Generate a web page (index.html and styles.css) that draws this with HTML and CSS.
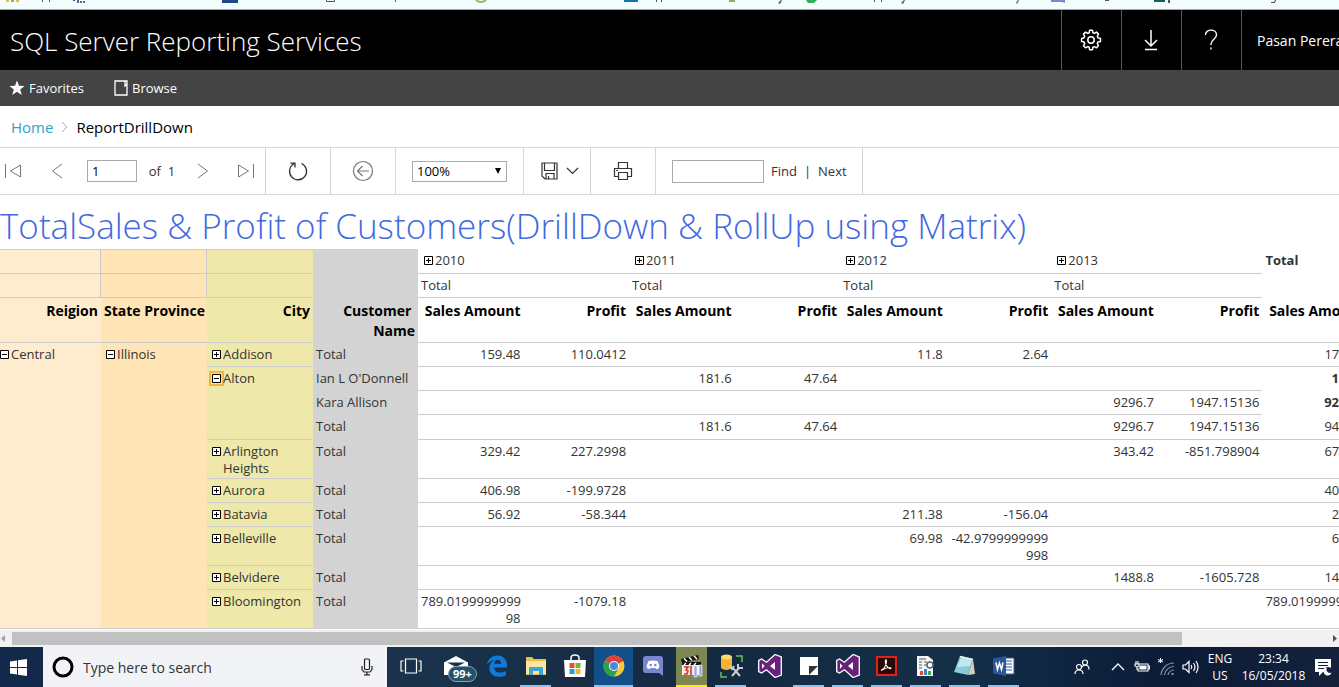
FILE: index.html
```html
<!DOCTYPE html>
<html lang="en">
<head>
<meta charset="utf-8">
<title>ReportDrillDown - SQL Server Reporting Services</title>
<link rel="stylesheet" href="styles.css">
</head>
<body>
<svg width="0" height="0" class="defs" aria-hidden="true">
  <defs>
    <symbol id="plus" viewBox="0 0 9 9"><path d="M.5.5h8v8h-8z" fill="#fff" stroke="#000"/><path d="M2 4.500h5M4.500 2v5" stroke="#000"/></symbol>
    <symbol id="minus" viewBox="0 0 9 9"><path d="M.5.5h8v8h-8z" fill="#fff" stroke="#000"/><path d="M2 4.500h5" stroke="#000"/></symbol>
    <symbol id="vs" viewBox="0 0 24 24"><path d="M17 .5 23.300 3v18L17 23.500l-8.500-7.700L3.500 19 .7 17.500v-11L3.500 5l5 3.200z" fill="#68217a" stroke="#fff" stroke-width="1.300"/><path d="M17 8v8l-5-4zM4 9.200 6.700 12 4 14.800z" fill="#fff"/></symbol>
  </defs>
</svg>
<div class="bookmarks" aria-hidden="true">
  <svg width="1339" height="9" viewBox="0 0 1339 9">
    <path d="M6 0h3v2h-3z" fill="#d8c548"/><path d="M11 0h3v2h-3z" fill="#b8a840"/><path d="M16 0h3v2h-3z" fill="#d8c548"/>
    <path d="M42 0h1v2h-1zM49 0h1v2h-1zM73 0h2v1h-2zM395 0h1v2h-1zM656 0h1v2h-1zM661 0h1v2h-1zM778 3l3-3h1l-2 4zM874 0h1v2h-1zM881 0h1v2h-1zM901 3l3-3h1l-2 4zM1016 3l2-3h1l-2 4zM1105 0h4v1h-4zM1168 0h2v3h-2zM1271 2h3l1-2h1l-1 3h-4z" fill="#555"/>
    <path d="M77 0h2v3h-2zM80 1h2v2h-2zM83 1h2v2h-2z" fill="#4a6f9c"/>
    <path d="M222 0h16v3h-16z" fill="#1f4788"/><path d="M326.500 0v1.500h8V0" fill="none" stroke="#555"/>
    <path d="M476 0q5 4 10 0" fill="none" stroke="#92ba63" stroke-width="2"/>
    <path d="M624 0h14v2h-14z" fill="#1276b2"/><path d="M729 0h6v2h-6z" fill="#8ab06b"/><path d="M806 0h11l-3 3h-6z" fill="#32ae55"/>
    <path d="M1051 0h14v3l-3-1h-11z" fill="#8187cc"/><path d="M1154 0h11v2h-11z" fill="#185c60"/>
  </svg>
</div>
<header class="brand">
  <h1>SQL Server Reporting Services</h1>
  <div class="brand-actions">
    <button type="button" aria-label="Settings"><svg width="22" height="22" viewBox="0 0 22 22" fill="none" stroke="#fff" stroke-width="1.500" stroke-linejoin="round"><path d="M9.300 3.700 9.500 1.300h3l.3 2.400 1.500.7 2.200-1.300 2 2-1.200 2.200.6 1.500 2.600.7v3l-2.600.6-.6 1.500 1.200 2.200-2 2-2.200-1.200-1.500.6-.3 2.500h-3l-.2-2.500-1.600-.6-2.200 1.200-2-2 1.200-2.200-.6-1.500-2.500-.6v-3l2.500-.7.6-1.500-1.200-2.200 2-2 2.200 1.300z"/><circle cx="11" cy="11" r="3.200"/></svg></button>
    <button type="button" aria-label="Download"><svg width="22" height="22" viewBox="0 0 22 22" fill="none" stroke="#fff" stroke-width="1.500"><path d="M11 1v16M5 11l6 6 6-6M5 20.500h12"/></svg></button>
    <button type="button" aria-label="Help"><svg width="22" height="22" viewBox="0 0 22 22" fill="none" stroke="#fff" stroke-width="1.400"><path d="M5.500 6C5.500-.5 16.500-.5 16.500 6c0 4-5.500 4.500-5.500 9v1"/><path d="M11 18.500v2"/></svg></button>
    <button type="button" class="user">Pasan Perera</button>
  </div>
</header>
<nav class="mainnav">
  <a href="#"><svg width="16" height="16" viewBox="0 0 16 16"><path fill="#fff" d="m8 .5 2 5.300 5.600.2-4.400 3.500 1.600 5.500L8 11.800 3.200 15l1.600-5.500L.4 6l5.600-.2z"/></svg>Favorites</a>
  <a href="#"><svg width="14" height="16" viewBox="0 0 14 16" fill="none" stroke="#fff" stroke-width="1.300"><path d="M1 1h12v14H1zM11 1v5l1-1 1 1"/></svg>Browse</a>
</nav>
<div class="crumbs">
  <a href="#">Home</a>
  <svg width="7" height="12" viewBox="0 0 7 12" fill="none" stroke="#aaa"><path d="m1 1 5 5-5 5"/></svg>
  <span>ReportDrillDown</span>
</div>
<div class="toolbar">
  <div class="group pager">
    <button type="button" class="page-first" aria-label="First page"><svg width="18" height="16" viewBox="0 0 18 16" fill="none" stroke="#777"><path d="M1.500 1v14M16.500 2v12L6.500 8z"/></svg></button>
    <button type="button" class="page-prev" aria-label="Previous page"><svg width="12" height="16" viewBox="0 0 12 16" fill="none" stroke="#777"><path d="M11 1 1.500 8 11 15"/></svg></button>
    <input type="text" value="1" aria-label="Current page">
    <span>of&nbsp; 1</span>
    <button type="button" class="page-next" aria-label="Next page"><svg width="12" height="16" viewBox="0 0 12 16" fill="none" stroke="#777"><path d="m1 1 9.500 7L1 15"/></svg></button>
    <button type="button" class="page-last" aria-label="Last page"><svg width="18" height="16" viewBox="0 0 18 16" fill="none" stroke="#777"><path d="M16.500 1v14M1.500 2v12l10-6z"/></svg></button>
  </div>
  <div class="group icon-group"><button type="button" aria-label="Refresh"><svg width="22" height="22" viewBox="0 0 22 22" fill="none" stroke="#333" stroke-width="1.300"><path d="M14.500 3.500a8.500 8.500 0 1 1-7.500.3M3.500 3.200H8V7.500"/></svg></button></div>
  <div class="group icon-group"><button type="button" aria-label="Back"><svg width="22" height="22" viewBox="0 0 22 22" fill="none" stroke="#777" stroke-width="1.200"><circle cx="11" cy="11" r="9.500"/><path d="M17 11H6M10.500 6 5.500 11l5 5"/></svg></button></div>
  <div class="group zoom">
    <select aria-label="Zoom"><option>100%</option></select>
    <svg class="drop" width="6" height="6" viewBox="0 0 6 6"><path d="M0 0h6L3 6z"/></svg>
  </div>
  <div class="group save-group"><button type="button" aria-label="Export"><svg width="38" height="18" viewBox="0 0 38 18" fill="none" stroke="#333" stroke-width="1.200"><path d="M1 1h15v16H4l-3-3zM3.500 1v7.500h10V1M5 17v-5.500h8V17M7.500 17v-3"/><path d="m26 6 5.500 5.500L37 6"/></svg></button></div>
  <div class="group icon-group"><button type="button" aria-label="Print"><svg width="20" height="20" viewBox="0 0 20 20" fill="none" stroke="#333" stroke-width="1.200"><path d="M5.500 7.500V1.500h9v6M5.500 15.500H1.500v-8h17v8h-4M5.500 11.500h9v7h-9zM3 9.500h2"/></svg></button></div>
  <div class="group find">
    <input type="text" aria-label="Find text">
    <button type="button">Find</button><span>|</span><button type="button">Next</button>
  </div>
</div>
<main class="report">
  <h2>TotalSales &amp; Profit of Customers(DrillDown &amp; RollUp using Matrix)</h2>
  <table>
    <colgroup><col class="c-region"><col class="c-wide"><col class="c-wide"><col class="c-cust"><col><col><col><col><col><col><col><col><col></colgroup>
    <thead>
      <tr class="first">
        <td class="region side"></td><td class="state side"></td><td class="city"></td><td class="cust"></td>
        <td colspan="2" class="year"><button type="button" aria-label="Expand 2010"><svg><use href="#plus"/></svg></button>2010</td>
        <td colspan="2" class="year"><button type="button" aria-label="Expand 2011"><svg><use href="#plus"/></svg></button>2011</td>
        <td colspan="2" class="year"><button type="button" aria-label="Expand 2012"><svg><use href="#plus"/></svg></button>2012</td>
        <td colspan="2" class="year"><button type="button" aria-label="Expand 2013"><svg><use href="#plus"/></svg></button>2013</td>
        <td class="bare grand">Total</td>
      </tr>
      <tr>
        <td class="region side"></td><td class="state side"></td><td class="city"></td><td class="cust"></td>
        <td colspan="2">Total</td><td colspan="2">Total</td><td colspan="2">Total</td><td colspan="2">Total</td><td class="bare"></td>
      </tr>
      <tr>
        <th class="region">Reigion</th><th class="state">State Province</th><th class="city">City</th><th class="cust">Customer&nbsp;<br>Name</th>
        <th>Sales Amount</th><th>Profit</th><th>Sales Amount</th><th>Profit</th><th>Sales Amount</th><th>Profit</th><th>Sales Amount</th><th>Profit</th><th>Sales Amount</th>
      </tr>
    </thead>
    <tbody>
      <tr>
        <td class="region flush" rowspan="10"><button type="button" aria-label="Collapse Central"><svg><use href="#minus"/></svg></button>Central</td>
        <td class="state tog" rowspan="10"><button type="button" aria-label="Collapse Illinois"><svg><use href="#minus"/></svg></button>Illinois</td>
        <td class="city tog"><button type="button" aria-label="Expand Addison"><svg><use href="#plus"/></svg></button>Addison</td><td class="cust">Total</td>
        <td class="n">159.48</td><td class="n">110.0412</td><td></td><td></td><td class="n">11.8</td><td class="n">2.64</td><td></td><td></td><td class="n">171.28</td>
      </tr>
      <tr>
        <td class="city tog" rowspan="3"><button type="button" class="focused" aria-label="Collapse Alton"><svg><use href="#minus"/></svg></button>Alton</td><td class="cust">Ian L O'Donnell</td>
        <td></td><td></td><td class="n">181.6</td><td class="n">47.64</td><td></td><td></td><td></td><td></td><td class="n bare strong">181.6</td>
      </tr>
      <tr>
        <td class="cust">Kara Allison</td>
        <td></td><td></td><td></td><td></td><td></td><td></td><td class="n">9296.7</td><td class="n">1947.15136</td><td class="n bare strong">9296.7</td>
      </tr>
      <tr class="subtotal">
        <td class="cust">Total</td>
        <td></td><td></td><td class="n">181.6</td><td class="n">47.64</td><td></td><td></td><td class="n">9296.7</td><td class="n">1947.15136</td><td class="n">9478.3</td>
      </tr>
      <tr>
        <td class="city tog"><button type="button" aria-label="Expand Arlington Heights"><svg><use href="#plus"/></svg></button>Arlington<br>Heights</td><td class="cust">Total</td>
        <td class="n">329.42</td><td class="n">227.2998</td><td></td><td></td><td></td><td></td><td class="n">343.42</td><td class="n">-851.798904</td><td class="n">672.84</td>
      </tr>
      <tr>
        <td class="city tog"><button type="button" aria-label="Expand Aurora"><svg><use href="#plus"/></svg></button>Aurora</td><td class="cust">Total</td>
        <td class="n">406.98</td><td class="n">-199.9728</td><td></td><td></td><td></td><td></td><td></td><td></td><td class="n">406.98</td>
      </tr>
      <tr>
        <td class="city tog"><button type="button" aria-label="Expand Batavia"><svg><use href="#plus"/></svg></button>Batavia</td><td class="cust">Total</td>
        <td class="n">56.92</td><td class="n">-58.344</td><td></td><td></td><td class="n">211.38</td><td class="n">-156.04</td><td></td><td></td><td class="n">268.3</td>
      </tr>
      <tr>
        <td class="city tog"><button type="button" aria-label="Expand Belleville"><svg><use href="#plus"/></svg></button>Belleville</td><td class="cust">Total</td>
        <td></td><td></td><td></td><td></td><td class="n">69.98</td><td class="n">-42.9799999999<br>998</td><td></td><td></td><td class="n">69.98</td>
      </tr>
      <tr>
        <td class="city tog"><button type="button" aria-label="Expand Belvidere"><svg><use href="#plus"/></svg></button>Belvidere</td><td class="cust">Total</td>
        <td></td><td></td><td></td><td></td><td></td><td></td><td class="n">1488.8</td><td class="n">-1605.728</td><td class="n">1488.8</td>
      </tr>
      <tr>
        <td class="city tog"><button type="button" aria-label="Expand Bloomington"><svg><use href="#plus"/></svg></button>Bloomington</td><td class="cust">Total</td>
        <td class="n">789.0199999999<br>98</td><td class="n">-1079.18</td><td></td><td></td><td></td><td></td><td></td><td></td><td class="n">789.0199999999</td>
      </tr>
    </tbody>
  </table>
</main>
<div class="hscroll" aria-hidden="true">
  <svg width="12" height="15" viewBox="0 0 12 15"><path d="M5 4v7L1 7.500z" fill="#a0a0a0"/></svg>
  <div class="track"><div class="thumb"></div></div>
  <svg width="12" height="15" viewBox="0 0 12 15"><path d="M6 4v7l4-3.500z" fill="#505050"/></svg>
</div>
<footer class="taskbar">
  <button type="button" class="start" aria-label="Start"><svg width="17" height="17" viewBox="0 0 17 17" fill="#fff"><path d="M0 2.500 7 1.500V8H0zM8 1.300 17 0v8H8zM0 9h7v6.500L0 14.500zM8 9h9v8l-9-1.300z"/></svg></button>
  <form class="search">
    <svg width="22" height="22" viewBox="0 0 22 22"><circle cx="11" cy="11" r="9" fill="none" stroke="#000" stroke-width="3"/></svg>
    <input type="text" placeholder="Type here to search" aria-label="Search">
    <svg width="12" height="18" viewBox="0 0 12 18" fill="none" stroke="#222" stroke-width="1.200"><rect x="3.500" y="1" width="5" height="10.500" rx="1"/><path d="M1 8v3.500l2 2.500h6l2-2.500V8M6 14v3M3 16.800h6"/></svg>
  </form>
  <div class="apps">
    <button type="button" class="taskview" aria-label="Task view"><svg width="22" height="16" viewBox="0 0 22 16" fill="none" stroke="#fff" stroke-width="1.200"><path d="M5.500 1h11v14h-11zM3.500 3H1v10h2.500M18.500 3H21v10h-2.500"/></svg></button>
    <button type="button" class="mail" aria-label="Mail"><svg width="26" height="20" viewBox="0 0 26 20"><path d="M1 6.500 13 0l12 6.500V19H1z" fill="#fff"/><path d="M4 6.500h18L13 11z" fill="#17314c"/></svg><span class="badge">99+</span></button>
    <button type="button" aria-label="Edge"><svg width="22" height="22" viewBox="0 0 22 22"><path fill="#0f7ad8" d="M1 9.500C2.500 3 6.500.5 11.500.5c6 0 9.500 4.500 9.500 9.500v2.500H8c.2 3.500 3 5 6 5 2.300 0 4.300-.6 6-1.600v4.400c-2 1-4.300 1.500-7 1.500-5.500 0-9.700-3.200-9.700-8.500 0-3.800 2-6.800 5.200-8.300C5 6 2.500 7 1 9.500zm7.200-.7h7C15.200 6.500 14 5 11.800 5 9.800 5 8.500 6.700 8.200 8.800z"/></svg></button>
    <button type="button" class="open" aria-label="File Explorer"><svg width="22" height="20" viewBox="0 0 22 20"><path d="M1 1h6l2 2h12v16H1z" fill="#e8bf4e"/><path d="M1 5h20v13H1z" fill="#fbe59c"/><path d="M4 19v-7q0-1 1-1h12q1 0 1 1v7h-4v-4H8v4z" fill="#3ba7d8"/></svg></button>
    <button type="button" aria-label="Store"><svg width="24" height="24" viewBox="0 0 24 24"><path d="M8 6V4q0-3 4-3t4 3v2" fill="none" stroke="#fff" stroke-width="1.500"/><path d="M1 6h22l-1 17H2z" fill="#fff"/><path d="M6.500 9h5v5h-5z" fill="#e8502a"/><path d="M12.500 9h5v5h-5z" fill="#7cb432"/><path d="M6.500 15h5v5h-5z" fill="#1b9fe0"/><path d="M12.500 15h5v5h-5z" fill="#f5b51e"/></svg></button>
    <button type="button" class="open current" aria-label="Chrome"><svg width="22" height="22" viewBox="0 0 22 22"><circle cx="11" cy="11" r="10.500" fill="#f8c932"/><path d="M11 11 1.900 5.700A10.500 10.500 0 0 1 20.100 5.700z" fill="#dc4437"/><path d="M20.100 5.700H11V11z" fill="#dc4437"/><path d="M1.900 5.700A10.500 10.500 0 0 0 11 21.500L15.500 13.600 11 11z" fill="#2ba24c"/><circle cx="11" cy="11" r="5" fill="#fff"/><circle cx="11" cy="11" r="4" fill="#4a86ea"/></svg></button>
    <button type="button" aria-label="Discord"><svg width="20" height="22" viewBox="0 0 20 22"><path d="M3 1h14q3 0 3 3v17l-4-3H3q-3 0-3-3V4q0-3 3-3z" fill="#7a87cf"/><path d="M5.500 6Q10 5 14.500 6q2 3.500 1.700 7l-2.700 1.300-1-1.300h-5l-1 1.300L3.800 13Q3.500 9.500 5.500 6z" fill="#fff"/><circle cx="7.700" cy="10" r="1.300" fill="#7a87cf"/><circle cx="12.300" cy="10" r="1.300" fill="#7a87cf"/></svg></button>
    <button type="button" class="alert" aria-label="Media player"><svg width="24" height="24" viewBox="0 0 24 24"><path d="M2 9h19v12H2z" fill="#f3eee0"/><path d="m1 5 17-4 1 4L2 9z" fill="#111"/><path d="M2 8h19v3H2z" fill="#111"/><path d="m4 4.500 3 3M9 3.300l3 3M14 2l3 3M4 11l2-2M9 11l2-2M14 11l2-2" stroke="#fff" stroke-width="1.500"/><path d="M4 13h4l-2 3 2 1-1 3H4M10 14l1-1v8" fill="none" stroke="#cf3428" stroke-width="1.600"/><path d="M14 12h3v11h-3zM19 11h3v11h-3z" fill="#9fa4ee" stroke="#fff" stroke-width=".6"/></svg></button>
    <button type="button" class="open" aria-label="SQL Server Management Studio"><svg width="26" height="26" viewBox="0 0 26 26"><path d="M3 4v11q5 4 11 0V4z" fill="#f4b52d"/><ellipse cx="8.500" cy="4" rx="5.500" ry="2.500" fill="#ffd873"/><path d="M18 3h6v6M3 19v5h6" fill="none" stroke="#62c553" stroke-width="1.500"/><path d="m14 14 8 9M22 14l-8 9" stroke="#222" stroke-width="4"/><path d="m14 14 8 9M21 15l-7 8" stroke="#c8cdd2" stroke-width="2"/><path d="M20 11v4h5M11 13l3 3 2-3" fill="none" stroke="#c8cdd2" stroke-width="2"/></svg></button>
    <button type="button" aria-label="Visual Studio"><svg width="24" height="24"><use href="#vs"/></svg></button>
    <button type="button" class="open" aria-label="Sticky Notes"><svg width="18" height="18" viewBox="0 0 18 18"><path d="M0 0h18v18H0z" fill="#fff"/><path d="M9 9h9l-9 9z" fill="#333"/></svg></button>
    <button type="button" class="open" aria-label="Visual Studio"><svg width="24" height="24"><use href="#vs"/></svg></button>
    <button type="button" class="open" aria-label="Acrobat Reader"><svg width="21" height="20" viewBox="0 0 21 20"><path d="M1 1h19v18H1z" fill="#2b0808" stroke="#e12217" stroke-width="2"/><path d="M5 14.500q5-3 5.500-9 0-2-1-1.500-1 4 2.500 7.500 3 2 3 .5-1-2-10 2.500z" fill="none" stroke="#fff" stroke-width="1.100"/></svg></button>
    <button type="button" class="open" aria-label="Report Builder"><svg width="19" height="22" viewBox="0 0 19 22"><path d="M1 1h11l5 4v16H1z" fill="#f5f7f8"/><path d="M3 4h7M3 7h3M8 7h3M3 10h3M8 10h3M3 13h3" stroke="#555"/><circle cx="14" cy="10" r="3" fill="#fff" stroke="#536572" stroke-width="1.500"/><path d="M4 16h3v4H4z" fill="#dd4a32"/><path d="M8 14h3v6H8z" fill="#3d83c8"/><path d="M12 16h3v4h-3z" fill="#40a650"/></svg></button>
    <button type="button" class="open" aria-label="Notepad"><svg width="23" height="22" viewBox="0 0 23 22"><path d="M7 1 20 4l-5 16-14-3z" fill="#8bcbd7"/><path d="m8 3 11 2-2 6-13 1z" fill="#c2e8ec"/><path d="m20 4 2 15-7 1z" fill="#d2cfbd"/><path d="M7 1.500 20 4.500" stroke="#f2f2f2" stroke-width="1.500"/></svg></button>
    <button type="button" class="open" aria-label="Word"><svg width="22" height="20" viewBox="0 0 22 20"><path d="M11 2h10v16H11z" fill="#fff" stroke="#315998"/><path d="M13 5h6M13 8h6M13 11h6M13 14h6" stroke="#315998"/><path d="M0 2.500 13 0v20L0 17.500z" fill="#2b579a"/><path d="m3 6.500 1.500 7L6.500 7l2 6.500 1.500-7" fill="none" stroke="#fff" stroke-width="1.500"/></svg></button>
  </div>
  <div class="tray">
    <button type="button" class="people" aria-label="People"><svg width="16" height="16" viewBox="0 0 16 16" fill="none" stroke="#fff" stroke-width="1.200"><circle cx="11" cy="3.500" r="2.500"/><circle cx="5" cy="8" r="2.500"/><path d="M1 15q0-4 4-4t4 4M8 8q1-2 3-2 4 0 4 4.500"/></svg></button>
    <button type="button" aria-label="Show hidden icons"><svg width="14" height="8" viewBox="0 0 14 8" fill="none" stroke="#fff" stroke-width="1.300"><path d="m1 7 6-6 6 6"/></svg></button>
    <button type="button" aria-label="Battery"><svg width="16" height="12" viewBox="0 0 16 12" fill="none" stroke="#fff" stroke-width="1.100"><path d="M5 3h9v7H4V7M14 5h1.500v3H14"/><path d="M6 5h6v3H6z" fill="#fff"/><path d="M1 3h4v2L3 6 1 5zM2 3V0M4 3V0M3 6v3"/></svg></button>
    <button type="button" aria-label="Network"><svg width="16" height="18" viewBox="0 0 16 18" fill="none" stroke="#8b97a8" stroke-width="1.200"><path d="M3 17A13 13 0 0 1 16 5M6.500 17A9.500 9.500 0 0 1 16 8.500M10 17a6 6 0 0 1 6-5"/><path d="M14.500 15v2" stroke-width="2"/><path d="M2.500 0v5M0 1.500l5 2.500M5 1.500 0 4" stroke="#fff" stroke-width="1"/></svg></button>
    <button type="button" aria-label="Volume"><svg width="17" height="14" viewBox="0 0 17 14" fill="none" stroke="#fff" stroke-width="1.200"><path d="M1 5h2.500L7 1.500v11L3.500 9H1zM9 5q1.500 2 0 4M11.500 3q3 4 0 8M14 1q4 6 0 12"/></svg></button>
    <button type="button" class="lang">ENG<br>US</button>
    <button type="button" class="clock">23:34<br>16/05/2018</button>
    <button type="button" class="notify" aria-label="Action center"><svg width="18" height="18" viewBox="0 0 18 18"><path d="M0 1h16v13H8l-4 4v-4H0z" fill="#fff"/><path d="M3 4.500h10M3 7.500h10M3 10.500h6" stroke="#14233b" stroke-width="1.200"/><circle cx="13" cy="13" r="4" fill="#14233b"/><path d="M12 9.500a4 4 0 1 0 4.500 5 3.500 3.500 0 0 1-4.500-5z" fill="#fff"/></svg></button>
  </div>
</footer>
</body>
</html>
```
FILE: styles.css
```css
* { box-sizing: border-box; }
body {
  margin: 0;
  height: 100vh;
  display: flex;
  flex-direction: column;
  overflow: hidden;
  background: #fff;
  color: #333;
  font-family: "Open Sans", "Noto Sans", sans-serif;
  font-size: 13px;
}
.defs { position: absolute; }
svg { flex: none; }
button {
  border: 0;
  padding: 0;
  background: none;
  color: inherit;
  font: inherit;
}
a { color: inherit; text-decoration: none; }
input, select {
  border: 1px solid #aaa;
  border-radius: 0;
  background: #fff;
  color: #000;
  font: inherit;
}

.bookmarks {
  flex: none;
  height: 10px;
  overflow: hidden;
  background: #f3fdfe;
  border-bottom: 1px solid #9fa8a8;
}
.bookmarks svg { display: block; }

.brand {
  flex: none;
  height: 60px;
  display: flex;
  align-items: center;
  justify-content: space-between;
  overflow: hidden;
  background: #000;
  color: #fff;
}
.brand h1 {
  margin: 0;
  padding: 2px 0 0 10px;
  font-size: 26px;
  font-weight: 300;
  white-space: nowrap;
}
.brand-actions { display: flex; align-self: stretch; }
.brand-actions button {
  width: 60px;
  display: flex;
  align-items: center;
  justify-content: center;
  padding-right: 1px;
  border-left: 1px solid #555;
}
.brand-actions .user {
  width: 98px;
  justify-content: flex-start;
  padding-left: 15px;
  overflow: hidden;
  white-space: nowrap;
  font-size: 14px;
}

.mainnav {
  flex: none;
  height: 36px;
  display: flex;
  align-items: center;
  gap: 30px;
  padding-left: 9px;
  background: #444;
  color: #fff;
}
.mainnav a { display: flex; align-items: center; gap: 4px; }

.crumbs {
  flex: none;
  height: 41px;
  display: flex;
  align-items: center;
  gap: 8px;
  padding-left: 11px;
  color: #000;
  font-size: 15px;
}
.crumbs a { color: #2f9fd0; }

.toolbar {
  flex: none;
  height: 48px;
  display: flex;
  border-top: 1px solid #d5d5d5;
  border-bottom: 1px solid #d5d5d5;
}
.group {
  display: flex;
  align-items: center;
  border-right: 1px solid #d5d5d5;
}
.group svg { display: block; }
.pager { width: 266px; }
.pager button { display: flex; justify-content: center; }
.pager input { width: 50px; height: 22px; padding: 0 4px; }
.pager span { width: 50px; text-align: center; }
.page-first { width: 26px; }
.page-prev { width: 61px; }
.page-next { width: 32px; }
.page-last { width: 46px; padding-left: 8px; }
.icon-group { width: 65px; justify-content: center; }
.zoom { position: relative; width: 128px; padding-left: 16px; }
.zoom select {
  width: 95px;
  height: 21px;
  padding: 0 4px;
  appearance: none;
}
.zoom .drop { position: absolute; right: 22px; top: 20px; pointer-events: none; }
.save-group { width: 67px; padding-left: 6px; justify-content: center; }
.find { width: 207px; padding-left: 16px; gap: 7px; }
.find input { width: 92px; height: 23px; }

.report {
  flex: 1;
  min-height: 0;
  overflow: hidden;
}
.report h2 {
  margin: 0;
  height: 54px;
  color: #4169e1;
  font-size: 35px;
  font-weight: 300;
  line-height: 61px;
  white-space: nowrap;
}
table {
  width: 1368px;
  table-layout: fixed;
  border-collapse: separate;
  border-spacing: 0;
}
.c-region { width: 101px; }
.c-wide { width: 106px; }
.c-cust { width: 105px; }
td, th {
  height: 24px;
  padding: 3px 3px 1px;
  border-bottom: 1px solid #ccc;
  line-height: 17px;
  text-align: left;
  vertical-align: top;
  white-space: nowrap;
}
th {
  color: #000;
  font-size: 14px;
  font-weight: 700;
  line-height: 20px;
  text-align: right;
}
.first td { height: 25px; padding-top: 2px; border-top: 1px solid #fff; }
.first .region, .first .state, .first .city { border-top-color: #ccc; }
.first .cust { border-top-color: #d3d3d3; }
.subtotal td { height: 25px; }
.n { text-align: right; }
.region { background: #ffebcd; }
.state { background: #ffe4b5; }
.city { background: #eee8aa; }
.cust { background: #d3d3d3; border-bottom-color: #d3d3d3; }
.side { border-right: 1px solid #ccc; }
.bare { border-bottom-color: transparent; }
.strong, .grand { font-weight: 700; }
td button {
  width: 9px;
  height: 9px;
  margin-right: 2px;
}
td svg { display: block; width: 9px; height: 9px; }
.first .year { padding-left: 6px; }
.flush { padding-left: 0; }
.tog { padding-left: 16px; text-indent: -11px; }
.tog button { text-indent: 0; }
.focused { outline: 2px solid #f2b542; outline-offset: 1px; }

.hscroll {
  flex: none;
  height: 17px;
  display: flex;
  align-items: center;
  background: #f1f1f1;
}
.track { flex: 1; height: 13px; }
.thumb { width: 89%; height: 100%; background: #c1c1c1; }

.taskbar {
  flex: none;
  height: 40px;
  display: flex;
  background: linear-gradient(90deg, #12284a, #1a324b 30%, #142a42 55%, #132f48 72%, #0b1a36 88%, #14223c);
  color: #fff;
}
.start { width: 43px; display: flex; align-items: center; justify-content: center; padding-right: 6px; }
.search {
  width: 344px;
  display: flex;
  align-items: center;
  gap: 9px;
  padding: 0 14px 0 9px;
  background: #f1f3f6;
}
.search input {
  flex: 1;
  min-width: 0;
  padding: 0;
  border: 0;
  background: none;
  font-size: 14px;
}
.search input::placeholder { color: #333; opacity: 1; }
.apps { flex: 1; display: flex; }
.apps button {
  width: 39px;
  display: flex;
  align-items: center;
  justify-content: center;
  border-bottom: 2px solid transparent;
}
.apps .taskview { width: 48px; }
.apps .mail { position: relative; width: 42px; }
.apps .open { border-image: linear-gradient(90deg, transparent 4px, #8ec3ee 4px 35px, transparent 35px) 0 0 2 0; }
.apps .current { background: #13508a; border-image: none; border-bottom-color: #8ec3ee; }
.apps .alert { width: 31px; margin: 0 4px; background: #7c8751; border-bottom-color: #fff200; }
.badge {
  position: absolute;
  left: 13px;
  top: 19px;
  padding: 0 4px;
  border: 1px solid #7fa2b8;
  border-radius: 8px;
  background: #294f69;
  font-size: 11px;
  font-weight: 700;
  line-height: 14px;
}
.tray { display: flex; align-items: center; }
.tray button { width: 24px; display: flex; align-items: center; justify-content: center; }
.tray .people { width: 48px; }
.tray .lang, .tray .clock { font-size: 12px; line-height: 17px; text-align: center; }
.tray .lang { width: 36px; }
.tray .clock { width: 71px; }
.tray .notify { width: 30px; }
```
